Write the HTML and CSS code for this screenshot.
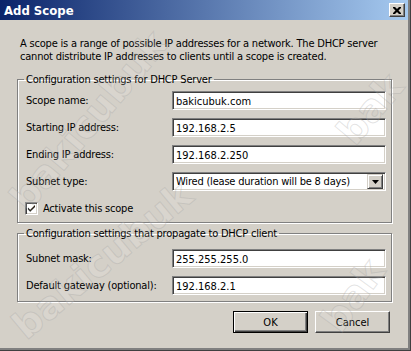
FILE: index.html
```html
<!doctype html>
<html lang="en">
    <head>
        <meta charset="UTF-8" />
        <title>Add Scope</title>
        <link rel="stylesheet" href="styles.css">
    </head>
    <body>
        <div class="window">
            <div class="titlebar">
                <span class="title">Add Scope</span>
                <button class="close-btn" type="button">
                    <svg width="8" height="7" viewBox="0 0 8 7">
                        <path d="M0 0h2l2 2 2-2h2v1l-2.5 2.5 2.5 2.5v1h-2l-2-2-2 2h-2v-1l2.5-2.5-2.5-2.5z" fill="#000" />
                    </svg>
                </button>
            </div>

            <div class="content">
                <p class="intro">
                    A scope is a range of possible IP addresses for a network. The DHCP server<br />
                    cannot distribute IP addresses to clients until a scope is created.
                </p>

                <fieldset class="group group-server">
                    <legend>Configuration settings for DHCP Server</legend>
                    <div class="form-grid">
                        <label for="scopeName">Scope name:</label>
                        <input type="text" id="scopeName" class="textbox" value="bakicubuk.com" />

                        <label for="startIp">Starting IP address:</label>
                        <input type="text" id="startIp" class="textbox" value="192.168.2.5" />

                        <label for="endIp">Ending IP address:</label>
                        <input type="text" id="endIp" class="textbox" value="192.168.2.250" />

                        <label>Subnet type:</label>
                        <div class="combo">
                            <span class="combo-value">Wired (lease duration will be 8 days)</span>
                            <span class="combo-btn">
                                <svg width="7" height="4" viewBox="0 0 7 4">
                                    <path d="M0 0h7l-3.5 4z" fill="#000" />
                                </svg>
                            </span>
                        </div>
                    </div>
                    <div class="check-row">
                        <span class="checkbox">
                            <svg width="9" height="9" viewBox="0 0 9 9">
                                <path d="M1 3.5l2.2 2.3 4.8-4.8v2l-4.8 4.8-2.2-2.3z" fill="#000" />
                            </svg>
                        </span>
                        Activate this scope
                    </div>
                </fieldset>

                <fieldset class="group group-client">
                    <legend>Configuration settings that propagate to DHCP client</legend>
                    <div class="form-grid">
                        <label for="subnetMask">Subnet mask:</label>
                        <input type="text" id="subnetMask" class="textbox" value="255.255.255.0" />

                        <label for="gateway">Default gateway (optional):</label>
                        <input type="text" id="gateway" class="textbox" value="192.168.2.1" />
                    </div>
                </fieldset>

                <div class="buttons">
                    <button type="button" class="btn btn-default">OK</button>
                    <button type="button" class="btn">Cancel</button>
                </div>
            </div>

            <span class="watermark wm-1">bakicubuk</span>
            <span class="watermark wm-2">bakicubuk</span>
            <span class="watermark wm-3">bak</span>
            <span class="watermark wm-4">bak</span>
        </div>
    </body>
</html>
```

FILE: styles.css
```css
* {
    margin: 0;
    padding: 0;
    box-sizing: border-box;
}

body {
    font-family: "DejaVu Sans Condensed", "DejaVu Sans", sans-serif;
    font-size: 11px;
    line-height: 13px;
    letter-spacing: -0.2px;
    color: #000;
    background: #d4d0c8;
    overflow: hidden;
}

.window {
    position: relative;
    width: 411px;
    height: 351px;
    background: #d4d0c8;
    border-right: 1px solid #404040;
    border-bottom: 1px solid #404040;
    box-shadow: inset -2px -2px 0 #808080;
    overflow: hidden;
}

.titlebar {
    height: 20px;
    margin-right: 2px;
    display: flex;
    align-items: center;
    justify-content: space-between;
    padding-left: 4px;
    padding-right: 3px;
    background: linear-gradient(to right, #0a246a, #a6caf0);
}

.title {
    color: #fff;
    font-weight: bold;
    font-size: 13px;
    letter-spacing: 0;
}

.close-btn {
    width: 16px;
    height: 14px;
    display: flex;
    align-items: center;
    justify-content: center;
    background: #d4d0c8;
    border: 1px solid;
    border-color: #fff #404040 #404040 #fff;
    box-shadow: inset -1px -1px 0 #808080;
}

.content {
    padding: 17px 0 0 17px;
    width: 392px;
}

.intro {
    padding-left: 3px;
    white-space: nowrap;
}

.group {
    border: 1px solid #808080;
    box-shadow: inset 1px 1px 0 #fff, 1px 1px 0 #fff;
    padding: 0 5px 0 8px;
    min-width: 0;
}

.group legend {
    padding: 0 2px;
    margin-left: -2px;
}

.group-server {
    margin-top: 10px;
    padding-top: 5px;
    padding-bottom: 7px;
}

.group-client {
    margin-top: 4px;
    padding-top: 9px;
    padding-bottom: 6px;
}

.form-grid {
    display: grid;
    grid-template-columns: 146px 1fr;
    row-gap: 8px;
    align-items: center;
}

.textbox,
.combo {
    height: 19px;
    font: inherit;
    color: #000;
    background: #fff;
    border: 1px solid;
    border-color: #808080 #fff #fff #808080;
    box-shadow: inset 1px 1px 0 #404040, inset -1px -1px 0 #d4d0c8;
}

.textbox {
    width: 100%;
    padding: 1px 3px 0;
    outline: none;
}

.combo {
    display: flex;
    align-items: center;
    justify-content: space-between;
    padding: 2px 2px 2px 3px;
}

.combo-btn {
    width: 16px;
    height: 15px;
    display: flex;
    align-items: center;
    justify-content: center;
    background: #d4d0c8;
    border: 1px solid;
    border-color: #d4d0c8 #404040 #404040 #d4d0c8;
    box-shadow: inset 1px 1px 0 #fff, inset -1px -1px 0 #808080;
}

.check-row {
    display: flex;
    align-items: center;
    gap: 5px;
    margin-top: 11px;
    margin-left: -1px;
}

.checkbox {
    width: 13px;
    height: 13px;
    display: flex;
    align-items: center;
    justify-content: center;
    background: #fff;
    border: 1px solid;
    border-color: #808080 #fff #fff #808080;
    box-shadow: inset 1px 1px 0 #404040, inset -1px -1px 0 #d4d0c8;
}

.buttons {
    display: flex;
    justify-content: flex-end;
    gap: 7px;
    margin-top: 9px;
    padding-right: 2px;
}

.btn {
    width: 75px;
    height: 22px;
    font: inherit;
    color: #000;
    background: #d4d0c8;
    border: 1px solid;
    border-color: #fff #404040 #404040 #fff;
    box-shadow: inset -1px -1px 0 #808080;
}

.btn-default {
    border: 1px solid #000;
    box-shadow: inset 1px 1px 0 #fff, inset -1px -1px 0 #404040, inset -2px -2px 0 #808080;
}

/* watermark from the original screenshot */
.watermark {
    position: absolute;
    font-family: "DejaVu Sans", sans-serif;
    font-weight: bold;
    font-size: 38px;
    line-height: 38px;
    letter-spacing: 0;
    color: rgba(255, 255, 255, 0.12);
    -webkit-text-stroke: 1px rgba(160, 160, 160, 0.3);
    transform-origin: 0 50%;
    white-space: nowrap;
    pointer-events: none;
}

.wm-1 {
    left: 18px;
    top: 186px;
    transform: rotate(-50deg);
}

.wm-2 {
    left: 18px;
    top: 312px;
    transform: rotate(-40deg);
}

.wm-3 {
    left: 330px;
    top: 308px;
    transform: rotate(-54deg);
}

.wm-4 {
    left: 345px;
    top: 120px;
    transform: rotate(-50deg);
}
```
